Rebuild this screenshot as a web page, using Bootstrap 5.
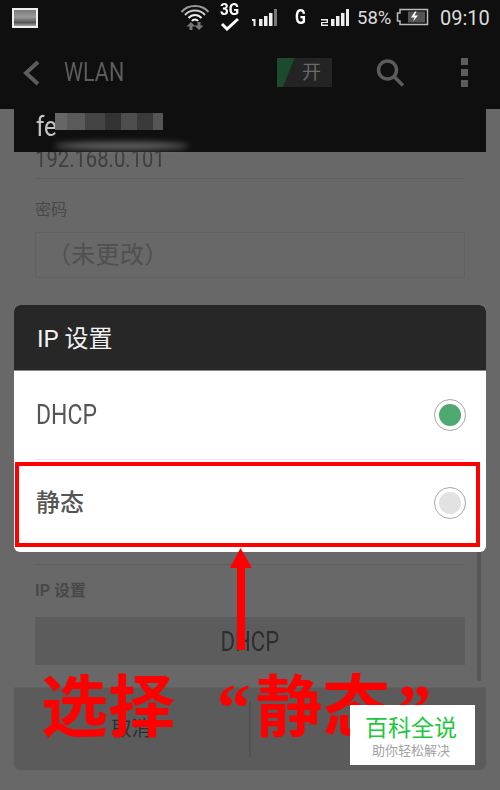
<!DOCTYPE html>
<html lang="zh">
<head>
    <meta charset="UTF-8">
    <title>WLAN IP 设置</title>
    <link href="https://cdn.jsdelivr.net/npm/bootstrap@5.3.2/dist/css/bootstrap.min.css" rel="stylesheet">
    <style>
        html, body { height: 790px; overflow: hidden; }
        body {
          background-color: #686868;
          font-family: Roboto, "Noto Sans CJK SC", sans-serif;
          position: relative;
          width: 500px;
        }
        .top-dark { background-color: #0f0f0f; height: 109px; }
        .status-row { height: 36px; position: relative; color: #e8e8e8; }
        .status-row svg, .status-row span { position: absolute; }
        .st-pic { left: 12px; top: 8px; }
        .st-wifi { left: 180px; top: 3px; }
        .st-check { left: 220px; top: 17px; }
        .st-sig1 { left: 252px; top: 8px; }
        .st-sig2 { left: 321px; top: 8px; }
        .st-batt { left: 396px; top: 8px; }
        .ic-3g { left: 220px; top: 1px; font-size: 16px; font-weight: 700; line-height: 18px; color: #fff; transform: scaleX(.95); transform-origin: left; }
        .ic-g { left: 295px; top: 5px; font-size: 20px; font-weight: 700; line-height: 24px; color: #fff; transform: scaleX(.8); transform-origin: left; }
        .batt-pct { left: 357px; top: 5px; font-size: 18.5px; line-height: 26px; color: #ddd; }
        .clock { left: 440px; top: 4px; font-size: 20px; line-height: 28px; color: #ddd; }
        .app-row { height: 73px; padding-left: 23px; }
        .app-title { color: #5c5c5c; font-size: 25px; margin-left: 24px; transform: scaleX(.86); transform-origin: left; width: 100px; }
        .wifi-toggle { width: 55px; height: 29px; margin-left: 113px; background: linear-gradient(112deg, #1c4a2c 0 16px, #242424 16.5px); color: #6a6a6a; font-size: 19px; line-height: 29px; padding-left: 25px; }
        .app-search { margin-left: 44px; }
        .app-more { margin-left: 56px; width: 7px; }
        .app-more i { width: 7px; height: 7px; background: #5c5c5c; display: block; }

        .sheet { margin: 0 14px; height: 661px; position: relative; }
        .sheet-head { height: 43px; background: #0f0f0f; position: relative; z-index: 1; padding: 1px 0 0 22px; color: #c4c4c4; font-size: 28px; line-height: 34px; }
        .sheet-head span { display: inline-block; transform: scaleX(.86); transform-origin: left; }
        .pixel-strip { position: absolute; left: 41px; top: 4px; width: 108px; height: 17px;
          background: linear-gradient(90deg, #666 0 12px, #5a5a5a 12px 30px, #444 30px 50px, #333 50px 66px, #4e4e4e 66px 82px, #3a3a3a 82px 98px, #555 98px 108px); filter: blur(.6px); }
        .pixel-smear { position: absolute; left: 40px; top: 33px; width: 135px; height: 8px; border-radius: 50%; background: #888; filter: blur(3px); opacity: .7; }
        .ip-text { margin: -7px 21px 0; font-size: 23px; line-height: 30px; color: #3e3e3e; height: 33px; transform: scaleX(.88); transform-origin: left; }
        .sheet-body { padding: 0 21px; }
        .sep-line { height: 1px; background: #5f5f5f; }
        .sep-lower { margin-top: 286px; }
        .field-label { color: #484848; font-size: 16px; line-height: 22px; }
        .label-pw { margin-top: 13px; padding-top: 7px; }
        .label-ip { margin-top: 15px; }
        .fake-input { height: 46px; border: 1px solid #616161; color: #505050; font-size: 24px; line-height: 44px; padding-left: 11px; letter-spacing: .3px; margin-top: 11px; }
        .ip-select { height: 48px; margin-top: 15px; background: #5c5c5c; color: #2e2e2e; font-size: 27px; line-height: 50px; }
        .ip-select span, .dlg-text { display: inline-block; transform: scaleX(.82); }
        .bottom-bar { height: 83px; margin-top: 22px; background: #5a5b5a; border-top: 1px solid #616161; border-radius: 0 0 6px 6px; color: #2e2e2e; font-size: 20px; }
        .bottom-bar > div { flex: 1 1 0; }
        .bottom-bar .bar-split { flex: 0 0 2px; height: 55px; background: #505150; }
        .scroll-thumb { position: absolute; left: 463px; top: 443px; width: 4px; height: 129px; background: #575757; }

        .ip-dialog { position: absolute; left: 14px; top: 305px; width: 472px; height: 247px; border-radius: 6px; overflow: hidden; background: #fff; z-index: 2; }
        .dlg-head { background: #272727; color: #f2f2f2; font-size: 24px; line-height: 68px; padding-left: 23px; border-bottom: 1px solid #8a8a8a; height: 66px; }
        .dlg-row { padding: 0 21px 0 22px; color: #555; }
        .dlg-row.first { height: 88px; font-size: 28px; }
        .dlg-row.second { height: 86px; font-size: 24px; }
        .dlg-sep { height: 1px; background: #e8e8e8; margin: 0 21px; }
        .dlg-radio { width: 32px; height: 32px; border: 1.5px solid #a8a8a8; border-radius: 50%; padding: 4px; margin-right: -1px; }
        .dlg-radio i { display: block; width: 100%; height: 100%; border-radius: 50%; background: #e2e2e2; }
        .dlg-radio.picked i { background: #4ea870; }
        .dlg-text { transform-origin: left; }
        .font-cjk { font-weight: 500; }

        .red-frame { position: absolute; left: 15px; top: 462px; width: 465px; height: 85px; border: 4px solid #f00; z-index: 3; }
        .red-arrow { position: absolute; left: 229px; top: 547px; z-index: 3; }
        .red-note { position: absolute; left: 41px; top: 664px; z-index: 3; color: #f00; font-size: 67px; line-height: 88px; font-weight: 700; white-space: nowrap; font-family: "Liberation Serif", "Noto Sans CJK SC", serif; }
        .red-note b { display: inline-block; width: 42px; }
        .red-note em { font-style: normal; }
        .quote-open { margin-right: 5px; }
        .quote-close { margin-left: 8px; }
        .wm-box { position: absolute; left: 350px; top: 705px; width: 125px; height: 60px; background: #fff; z-index: 4; text-align: center; padding-right: 3px; }
        .wm-top { color: #1ec83c; font-size: 23px; line-height: 28px; margin-top: 10px; }
        .wm-sub { color: #a2a2a2; font-size: 13px; line-height: 16px; }
    </style>
</head>
<body>

<div class="top-dark">
    <div class="status-row">
        <svg class="st-pic" width="26" height="20" viewBox="0 0 26 20">
            <defs><linearGradient id="pic" x1="0" y1="0" x2="0" y2="1"><stop offset="0" stop-color="#777"/><stop offset=".45" stop-color="#999"/><stop offset=".75" stop-color="#555"/><stop offset="1" stop-color="#bbb"/></linearGradient></defs>
            <rect x="1" y="1" width="24" height="18" fill="url(#pic)" stroke="#eee" stroke-width="2"/>
        </svg>
        <svg class="st-wifi" width="30" height="28" viewBox="0 0 30 28" fill="none" stroke="#999" stroke-width="2">
            <path d="M1.500 9C8 1 22 1 28.500 9"/>
            <path d="M5 12C10 6 20 6 25 12" stroke="#ccc"/>
            <path d="M8.500 15C12 11 18 11 21.500 15" stroke="#eee"/>
            <path d="M12 18C13.500 16 16.500 16 18 18" stroke="#fff"/>
            <path d="M11 19l-4.500 4.500h3V27h3v-3.500h3zM19 27l4.500-4.500h-3V19h-3v3.500h-3z" fill="#777" stroke="none"/>
        </svg>
        <span class="ic-3g">3G</span>
        <svg class="st-check" width="20" height="14" viewBox="0 0 20 14" fill="none" stroke="#fff" stroke-width="3"><path d="M2 7l5 5L18 2"/></svg>
        <svg class="st-sig1" width="27" height="18" viewBox="0 0 27 18" fill="#eee">
            <path d="M0 11h3.500v7H1.500v-5H0zM7 11h3.500v7H7zM12 8h3.500v10H12zM17 5h3.500v13H17z"/><path d="M22 1h3v17h-3z" fill="#777"/>
        </svg>
        <span class="ic-g">G</span>
        <svg class="st-sig2" width="28" height="18" viewBox="0 0 28 18" fill="#eee">
            <path d="M0 11h7v4H1.500v1.500H7V18H0v-4h5.500v-1.500H0zM10 11h3.500v7H10zM15 8h3.500v10H15zM20 5h3.500v13H20zM25 1h3v17h-3z"/>
        </svg>
        <span class="batt-pct">58%</span>
        <svg class="st-batt" width="33" height="18" viewBox="0 0 33 18" fill="none">
            <path d="M4 5V1.500h27.500v15H4V13H1.500V5z" stroke="#bbb" stroke-width="1.500"/>
            <rect x="12" y="3.500" width="17" height="11" fill="#555"/>
            <path d="M19 3.500l-4 6h3.500l-1.500 4 5-6h-3.500l2-4z" fill="#fff"/>
        </svg>
        <span class="clock">09:10</span>
    </div>
    <div class="app-row d-flex align-items-center">
        <svg width="17" height="26" viewBox="0 0 17 26" fill="none" stroke="#5c5c5c" stroke-width="4"><path d="M15 2L3 13l12 11"/></svg>
        <div class="app-title">WLAN</div>
        <div class="wifi-toggle">开</div>
        <svg class="app-search" width="29" height="28" viewBox="0 0 29 28" fill="none" stroke="#5c5c5c" stroke-width="3.500"><circle cx="11.500" cy="11" r="9"/><path d="M18 17.500l9 9"/></svg>
        <div class="app-more d-flex flex-column gap-1"><i></i><i></i><i></i></div>
    </div>
</div>

<div class="sheet">
    <div class="sheet-head">
        <span>fe</span>
        <div class="pixel-strip"></div>
        <div class="pixel-smear"></div>
    </div>
    <div class="ip-text">192.168.0.101</div>
    <div class="sheet-body">
        <div class="sep-line"></div>
        <div class="field-label label-pw">密码</div>
        <div class="fake-input">（未更改）</div>
        <div class="sep-line sep-lower"></div>
        <div class="field-label label-ip fw-bold">IP 设置</div>
        <div class="ip-select text-center"><span>DHCP</span></div>
    </div>
    <div class="bottom-bar d-flex align-items-center text-center">
        <div>取消</div>
        <div class="bar-split"></div>
        <div></div>
    </div>
    <div class="scroll-thumb"></div>
</div>

<div class="ip-dialog">
    <div class="dlg-head">IP 设置</div>
    <div class="dlg-row first d-flex align-items-center justify-content-between">
        <span class="dlg-text">DHCP</span>
        <div class="dlg-radio picked"><i></i></div>
    </div>
    <div class="dlg-sep"></div>
    <div class="dlg-row second d-flex align-items-center justify-content-between">
        <span class="font-cjk">静态</span>
        <div class="dlg-radio"><i></i></div>
    </div>
</div>

<div class="red-frame"></div>
<svg class="red-arrow" width="24" height="104" viewBox="0 0 24 104" fill="#f00"><path d="M11.500 1L23 21h-7v82H8V21H1z"/></svg>
<div class="red-note">选择<b></b><em class="quote-open">“</em>静态<em class="quote-close">”</em></div>

<div class="wm-box">
    <div class="wm-top">百科全说</div>
    <div class="wm-sub">助你轻松解决</div>
</div>

<script src="https://cdn.jsdelivr.net/npm/bootstrap@5.3.2/dist/js/bootstrap.bundle.min.js"></script>
</body>
</html>
